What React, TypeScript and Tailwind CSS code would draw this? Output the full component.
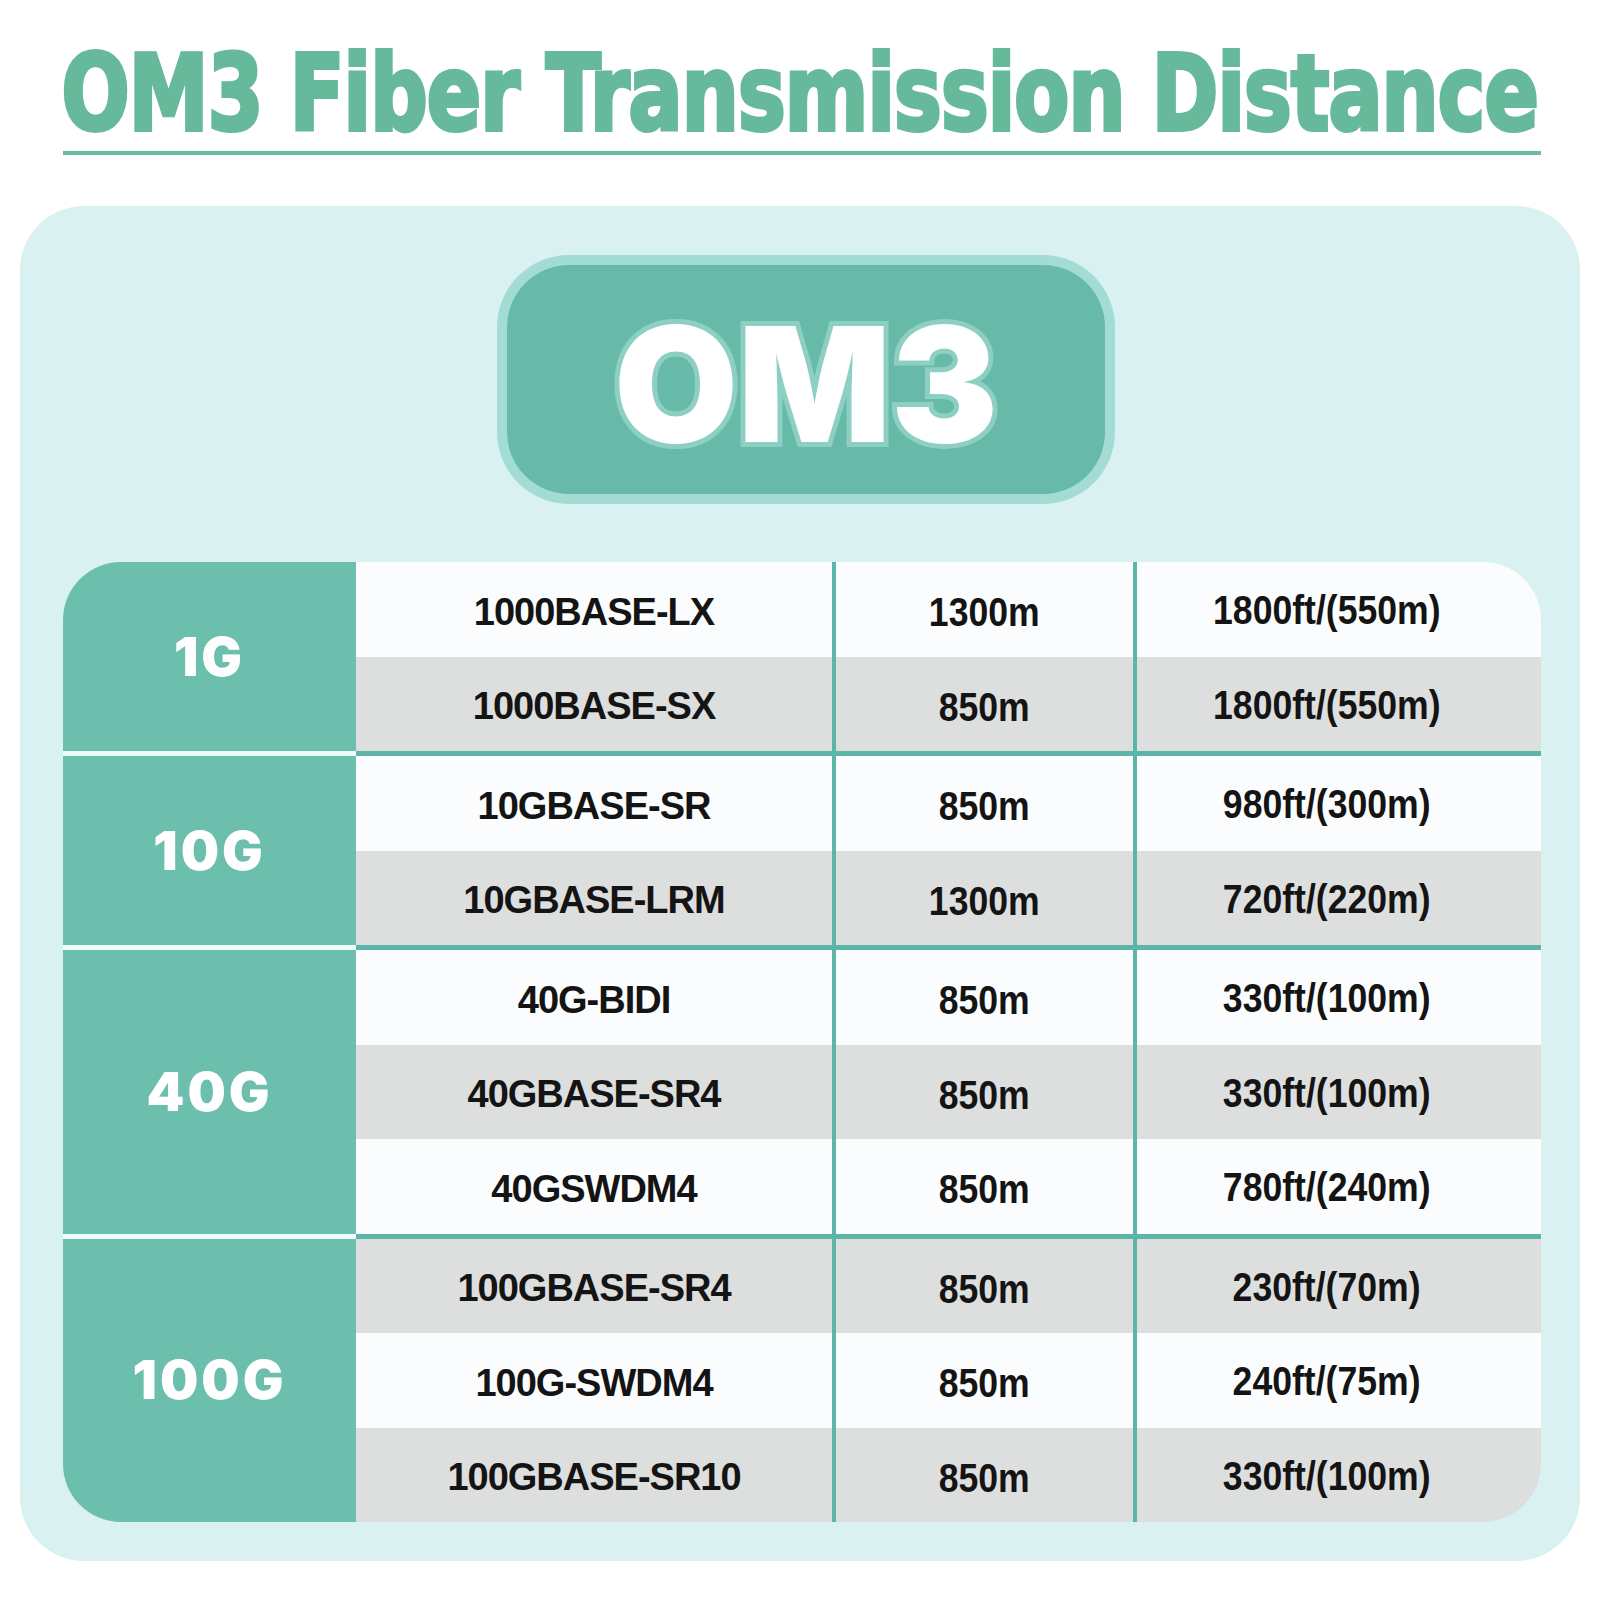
import React from 'react';

interface Row {
  model: string;
  dist: string;
  range: string;
}

interface Group {
  label: string;
  rows: Row[];
}

const groups: Group[] = [
  {
    label: '1G',
    rows: [
      { model: '1000BASE-LX', dist: '1300m', range: '1800ft/(550m)' },
      { model: '1000BASE-SX', dist: '850m', range: '1800ft/(550m)' },
    ],
  },
  {
    label: '10G',
    rows: [
      { model: '10GBASE-SR', dist: '850m', range: '980ft/(300m)' },
      { model: '10GBASE-LRM', dist: '1300m', range: '720ft/(220m)' },
    ],
  },
  {
    label: '40G',
    rows: [
      { model: '40G-BIDI', dist: '850m', range: '330ft/(100m)' },
      { model: '40GBASE-SR4', dist: '850m', range: '330ft/(100m)' },
      { model: '40GSWDM4', dist: '850m', range: '780ft/(240m)' },
    ],
  },
  {
    label: '100G',
    rows: [
      { model: '100GBASE-SR4', dist: '850m', range: '230ft/(70m)' },
      { model: '100G-SWDM4', dist: '850m', range: '240ft/(75m)' },
      { model: '100GBASE-SR10', dist: '850m', range: '330ft/(100m)' },
    ],
  },
];

export default function App() {
  let rowIndex = 0;

  return (
    <div className="w-[1600px] h-[1600px] bg-white font-['Liberation_Sans',Arial,sans-serif] text-[#141414]">
      {/* Titre */}
      <div className="pt-[41px] flex justify-center">
        <h1 className="font-['DejaVu_Sans_Condensed','DejaVu_Sans',sans-serif] font-bold text-[106px] leading-none text-[#66b99b] whitespace-nowrap scale-x-[0.84] tracking-[-1px] [-webkit-text-stroke:4px_#66b99b]">
          OM3 Fiber Transmission Distance
        </h1>
      </div>
      <div className="ml-[63px] mt-[4px] w-[1478px] h-[4px] bg-[#6cbba1]" />

      {/* Panneau */}
      <div className="ml-[20px] mt-[51px] w-[1560px] h-[1355px] rounded-[64px] bg-[#d9f2f1] pt-[49px]">
        <div className="ml-[477px] w-[618px] h-[249px] rounded-[72px] bg-[#a2dcd4] p-[10px]">
          <div className="w-full h-full rounded-[62px] bg-[#67baa8] flex items-center justify-center pt-[8px]">
            <span className="font-['Inter',sans-serif] font-black text-[160px] leading-none text-white [-webkit-text-stroke:10px_#8dd0c3] [paint-order:stroke_fill]">
              OM3
            </span>
          </div>
        </div>

        {/* Tableau */}
        <div className="ml-[43px] mt-[58px] w-[1478px] rounded-[58px] overflow-hidden">
          {groups.map((g, gi) => (
            <div key={g.label}>
              {gi > 0 && (
                <div className="flex h-[5px]">
                  <div className="w-[293px] bg-[#effbf9]" />
                  <div className="flex-1 bg-[#5db4a8]" />
                </div>
              )}
              <div className="flex">
                <div className="w-[293px] shrink-0 bg-[#6dbfad] flex items-center justify-center">
                  <span className="font-['Inter',sans-serif] font-black text-[54px] leading-none text-white tracking-[3px]">
                    {g.label}
                  </span>
                </div>
                <div className="flex-1 flex flex-col">
                  {g.rows.map((r) => {
                    const gray = rowIndex++ % 2 === 1;
                    return (
                      <div
                        key={r.model}
                        className={
                          'grid grid-cols-[476px_4px_297px_4px_1fr] h-[94.5px] ' +
                          (gray ? 'bg-[#dddede]' : 'bg-[#fafcfd]')
                        }
                      >
                        <div className="flex items-center justify-center pt-[6px] font-bold text-[38px] tracking-[-1px]">
                          {r.model}
                        </div>
                        <div className="bg-[#5db4a8]" />
                        <div className="flex items-center justify-center pt-[6px] font-bold text-[40px]">
                          <span className="scale-x-[0.89]">{r.dist}</span>
                        </div>
                        <div className="bg-[#5db4a8]" />
                        <div className="flex items-center justify-center pr-[24px] pt-[2px] font-bold text-[40px]">
                          <span className="scale-x-[0.89]">{r.range}</span>
                        </div>
                      </div>
                    );
                  })}
                </div>
              </div>
            </div>
          ))}
        </div>
      </div>
    </div>
  );
}
